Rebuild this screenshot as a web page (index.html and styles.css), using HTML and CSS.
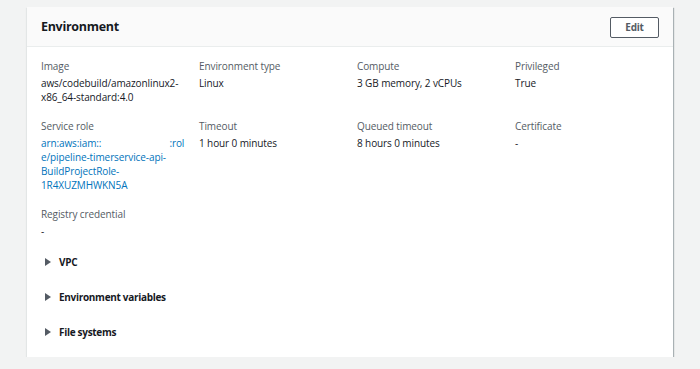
FILE: index.html
```html
<!DOCTYPE html>
<html lang="en">
<head>
    <meta charset="UTF-8">
    <meta name="viewport" content="width=device-width, initial-scale=1.0">
    <title>Environment</title>
    <link rel="stylesheet" href="styles.css">
</head>
<body>
    <div class="panel">
        <div class="panel-header">
            <h2 class="panel-title">Environment</h2>
            <button class="btn">Edit</button>
        </div>

        <div class="panel-body">
            <!-- Detalhes do ambiente -->
            <div class="grid">
                <div class="field">
                    <div class="label">Image</div>
                    <div class="value">aws/codebuild/amazonlinux2-x86_64-standard:4.0</div>
                </div>
                <div class="field">
                    <div class="label">Environment type</div>
                    <div class="value">Linux</div>
                </div>
                <div class="field">
                    <div class="label">Compute</div>
                    <div class="value">3 GB memory, 2 vCPUs</div>
                </div>
                <div class="field">
                    <div class="label">Privileged</div>
                    <div class="value">True</div>
                </div>

                <div class="field">
                    <div class="label">Service role</div>
                    <div class="value"><a class="link" href="#">arn:aws:iam::<span class="masked"></span>:rol<br>e/pipeline-timerservice-api-<br>BuildProjectRole-<br>1R4XUZMHWKN5A</a></div>
                </div>
                <div class="field">
                    <div class="label">Timeout</div>
                    <div class="value">1 hour 0 minutes</div>
                </div>
                <div class="field">
                    <div class="label">Queued timeout</div>
                    <div class="value">8 hours 0 minutes</div>
                </div>
                <div class="field">
                    <div class="label">Certificate</div>
                    <div class="value">-</div>
                </div>

                <div class="field">
                    <div class="label">Registry credential</div>
                    <div class="value">-</div>
                </div>
            </div>

            <!-- Secoes expansiveis -->
            <div class="sections">
                <div class="section"><span class="caret"></span>VPC</div>
                <div class="section"><span class="caret"></span>Environment variables</div>
                <div class="section"><span class="caret"></span>File systems</div>
            </div>
        </div>
    </div>
</body>
</html>
```

FILE: styles.css
```css
body {
    font-family: 'Open Sans', 'Liberation Sans', sans-serif;
    margin: 0;
    padding: 7px 27px 0 27px;
    background: #f2f3f3;
    color: #16191f;
    font-size: 10px;
    letter-spacing: -0.1px;
}

.panel {
    background: #ffffff;
    height: 350px;
    box-sizing: border-box;
    box-shadow: 1px 1px 1px rgba(0, 28, 36, 0.3), -1px 1px 1px rgba(0, 28, 36, 0.06);
}

.panel-header {
    display: flex;
    align-items: center;
    justify-content: space-between;
    height: 40px;
    box-sizing: border-box;
    padding: 0 14px;
    background: #fafafa;
    border-bottom: 1px solid #eaeded;
}

.panel-title {
    margin: 0;
    font-size: 12.5px;
    letter-spacing: -0.3px;
    font-weight: bold;
    color: #16191f;
}

.btn {
    width: 49px;
    height: 21px;
    padding: 0;
    background: #ffffff;
    border: 1px solid #545b64;
    border-radius: 2px;
    font-family: inherit;
    font-size: 10px;
    letter-spacing: -0.2px;
    font-weight: bold;
    color: #545b64;
    margin-top: 1px;
}

.panel-body {
    padding: 12px 14px 0 14px;
}

.grid {
    display: grid;
    grid-template-columns: repeat(4, minmax(0, 1fr));
    column-gap: 14px;
    row-gap: 14px;
}

.label {
    color: #545b64;
    line-height: 14px;
    margin-bottom: 3px;
}

.value {
    line-height: 14.3px;
}

.link {
    color: #0073bb;
    text-decoration: none;
}

.masked {
    display: inline-block;
    width: 68px;
}

.sections {
    margin-top: 6px;
}

.section {
    display: flex;
    align-items: center;
    height: 35px;
    padding-left: 4px;
    font-weight: bold;
    letter-spacing: -0.3px;
    color: #16191f;
}

.caret {
    width: 0;
    height: 0;
    border-top: 4px solid transparent;
    border-bottom: 4px solid transparent;
    border-left: 6px solid #545b64;
    margin-right: 8px;
}
```
